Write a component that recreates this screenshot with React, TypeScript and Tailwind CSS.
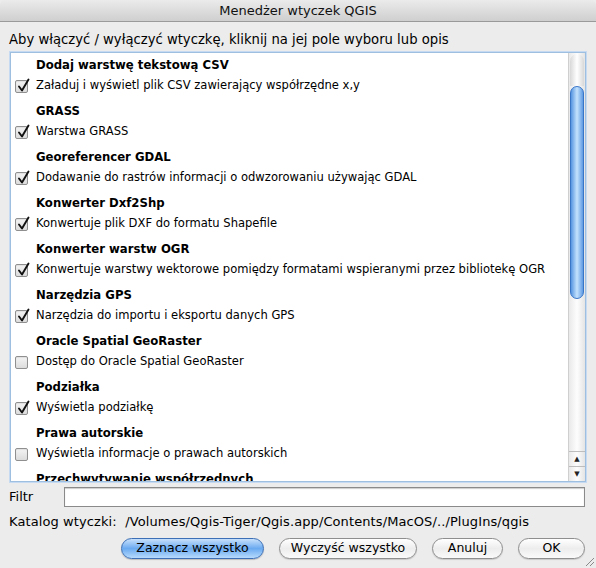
import React from "react";

const plugins = [
  { name: "Dodaj warstwę tekstową CSV", desc: "Załaduj i wyświetl plik CSV zawierający współrzędne x,y", on: true },
  { name: "GRASS", desc: "Warstwa GRASS", on: true },
  { name: "Georeferencer GDAL", desc: "Dodawanie do rastrów informacji o odwzorowaniu używając GDAL", on: true },
  { name: "Konwerter Dxf2Shp", desc: "Konwertuje plik DXF do formatu Shapefile", on: true },
  { name: "Konwerter warstw OGR", desc: "Konwertuje warstwy wektorowe pomiędzy formatami wspieranymi przez bibliotekę OGR", on: true },
  { name: "Narzędzia GPS", desc: "Narzędzia do importu i eksportu danych GPS", on: true },
  { name: "Oracle Spatial GeoRaster", desc: "Dostęp do Oracle Spatial GeoRaster", on: false },
  { name: "Podziałka", desc: "Wyświetla podziałkę", on: true },
  { name: "Prawa autorskie", desc: "Wyświetla informacje o prawach autorskich", on: false },
  { name: "Przechwytywanie współrzędnych", desc: "", on: false },
];

const Check = ({ on }: { on: boolean }) => (
  <div className="relative w-[13px] h-[13px] shrink-0 rounded-[2px] border border-[#8f8f8f] bg-gradient-to-b from-[#f4f4f4] to-[#dcdcdc] shadow-[inset_0_1px_1px_rgba(0,0,0,0.08)]">
    {on && (
      <svg className="absolute left-[1px] -top-[3px]" width="14" height="15" viewBox="0 0 14 15">
        <path d="M2 8.5 L5 12.5 L11.5 1.5" fill="none" stroke="#111" strokeWidth="1.9" strokeLinecap="round" strokeLinejoin="round" />
      </svg>
    )}
  </div>
);

const Button = ({ label, primary, w }: { label: string; primary?: boolean; w: string }) => (
  <div
    className={`${w} h-[21px] rounded-full flex items-center justify-center text-[12.5px] text-black border ${
      primary
        ? "border-[#3c6fb5] bg-gradient-to-b from-[#c7e0fb] via-[#6aaaf0] to-[#b6dafc] shadow-[0_1px_1px_rgba(0,0,0,0.2)]"
        : "border-[#8e8e8e] bg-gradient-to-b from-[#ffffff] via-[#ededed] to-[#fafafa] shadow-[0_1px_1px_rgba(0,0,0,0.15)]"
    }`}
  >
    {label}
  </div>
);

export default function App() {
  return (
    <div
      className="w-[596px] h-[568px] bg-[#ececec] flex flex-col overflow-hidden relative"
      style={{ fontFamily: '"DejaVu Sans", "Noto Sans", sans-serif' }}
    >
      <div className="h-[22px] shrink-0 pt-[1px] bg-gradient-to-b from-[#ebebeb] to-[#cfcfcf] border-b border-[#9a9a9a] rounded-t-[5px] flex items-center justify-center text-[13px] text-[#111]">
        Menedżer wtyczek QGIS
      </div>

      <div className="pl-[9px] pt-[9px] text-[13.2px] text-black leading-[18px] whitespace-nowrap">
        Aby włączyć / wyłączyć wtyczkę, kliknij na jej pole wyboru lub opis
      </div>

      <div className="mx-[10px] mt-[3px] h-[430px] border border-[#9fbfe0] shadow-[0_0_0_1px_#c6dbf2] bg-white flex overflow-hidden">
        <div className="flex-1 overflow-hidden pt-[3px]">
          {plugins.map((p) => (
            <div key={p.name} className="h-[46px] flex flex-col">
              <div className="pl-[25px] h-[20px] flex items-center text-[11.7px] font-bold text-black whitespace-nowrap">{p.name}</div>
              <div className="pl-[4px] h-[20px] flex items-center gap-[8px] text-[11.55px] text-black whitespace-nowrap">
                <Check on={p.on} />
                <span>{p.desc}</span>
              </div>
            </div>
          ))}
        </div>
        <div className="w-[17px] shrink-0 border-l border-[#cfcfcf] bg-gradient-to-r from-[#e9e9e9] via-[#fdfdfd] to-[#e4e4e4] flex flex-col">
          <div className="h-[32px] mx-[1px] rounded-t-full bg-gradient-to-r from-[#d8d8d8] via-[#ffffff] to-[#d8d8d8] mt-[1px]" />
          <div className="h-[213px] mx-[1px] rounded-full border border-[#3a76c8] bg-gradient-to-r from-[#5595e0] via-[#c4e2fd] to-[#5d9ae2]" />
          <div className="flex-1" />
          <div className="h-[15px] border-t border-[#bdbdbd] flex items-center justify-center text-[7px] text-[#222]">▲</div>
          <div className="h-[15px] border-t border-[#bdbdbd] flex items-center justify-center text-[7px] text-[#222]">▼</div>
        </div>
      </div>

      <div className="flex items-center mt-[5px] pl-[9px] pr-[11px] h-[20px]">
        <span className="w-[55px] text-[13px] text-black">Filtr</span>
        <div className="flex-1 h-[20px] bg-white border border-[#8a8a8a] shadow-[inset_0_1px_1px_rgba(0,0,0,0.2)]" />
      </div>

      <div className="pl-[9px] mt-[6px] h-[18px] flex items-center text-[13px] tracking-[0.1px] text-black whitespace-nowrap">
        Katalog wtyczki:&nbsp; /Volumes/Qgis-Tiger/Qgis.app/Contents/MacOS/../PlugIns/qgis
      </div>

      <div className="flex items-center justify-end gap-[15px] pr-[11px] mt-[7px]">
        <Button label="Zaznacz wszystko" primary w="w-[143px]" />
        <Button label="Wyczyść wszystko" w="w-[138px]" />
        <Button label="Anuluj" w="w-[71px]" />
        <Button label="OK" w="w-[67px]" />
      </div>

      <svg className="absolute right-[1px] bottom-[1px]" width="11" height="11" viewBox="0 0 11 11">
        <path d="M10 2 L2 10 M10 6 L6 10" stroke="#8a8a8a" strokeWidth="1" />
      </svg>
    </div>
  );
}
